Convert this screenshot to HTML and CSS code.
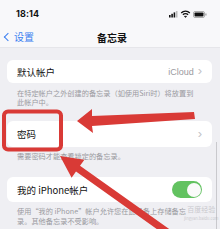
FILE: index.html
```html
<!DOCTYPE html>
<html lang="zh">
<head>
<meta charset="utf-8">
<link rel="stylesheet" href="styles.css">
</head>
<body>
<div class="screen">
  <div class="top">
    <div class="status">
      <span class="time">18:14</span>
      <span class="icons">
        <svg width="40" height="8" viewBox="0 0 40 8">
          <rect x="0" y="5" width="1.6" height="2.5" fill="#111"/>
          <rect x="2.3" y="3.8" width="1.6" height="3.7" fill="#111"/>
          <rect x="4.6" y="2.4" width="1.6" height="5.1" fill="#111"/>
          <rect x="6.9" y="1" width="1.6" height="6.5" fill="#bbb"/>
          <path d="M12.2 3 A6 6 0 0 1 20.8 3" stroke="#111" stroke-width="1.3" fill="none"/>
          <path d="M13.9 4.7 A3.6 3.6 0 0 1 19.1 4.7" stroke="#111" stroke-width="1.3" fill="none"/>
          <path d="M15.5 6.3 L16.5 7.4 L17.5 6.3 Z" fill="#111" stroke="#111" stroke-width="0.8"/>
          <rect x="24.5" y="1.5" width="11" height="6" rx="1.5" fill="#fff" stroke="#999" stroke-width="0.8"/>
          <rect x="25.5" y="2.5" width="9" height="4" rx="0.8" fill="#111"/>
          <rect x="36.3" y="3.5" width="1.2" height="2" fill="#999"/>
        </svg>
      </span>
    </div>
    <div class="nav">
      <span class="back"><span class="chev-left"></span>设置</span>
      <span class="title">备忘录</span>
    </div>
  </div>
  <div class="content">
    <div class="card card1">
      <span class="label">默认帐户</span>
      <span class="value">iCloud <span class="chev">&#x203A;</span></span>
    </div>
    <p class="foot foot1">在特定帐户之外创建的备忘录（如使用Siri时）将放置到此帐户中。</p>
    <div class="card card2">
      <span class="label">密码</span>
      <span class="value"><span class="chev">&#x203A;</span></span>
    </div>
    <p class="foot foot2">需要密码才能查看锁定的备忘录。</p>
    <div class="card card3">
      <span class="label">我的 iPhone帐户</span>
      <span class="toggle"><span class="knob"></span></span>
    </div>
    <p class="foot foot3">使用“我的 iPhone”帐户允许您在此设备上存储备忘录。其他备忘录不受影响。</p>
  </div>
  <div class="scrollbar"></div>
  <div class="watermark">百度经验<br><span class="wm-small">jingyan.baidu.com</span></div>
  <svg class="marks" width="220" height="229" viewBox="0 0 220 229">
    <rect x="4" y="111.5" width="57" height="38" rx="4" fill="none" stroke="#d93a36" stroke-width="4"/>
    <polygon points="77,121 92,109 92,116 194,112 195,119 92,126 93,133" fill="#d93a36"/>
    <polygon points="60,156 84.4,159.7 80,165.8 172,231 168,237 76,171.6 71.6,177.7" fill="#d93a36"/>
  </svg>
</div>
</body>
</html>
```

FILE: styles.css
```css
* { box-sizing: border-box; margin: 0; padding: 0; }
html, body { width: 220px; height: 229px; overflow: hidden; }
body {
  font-family: "Noto Sans CJK SC", "Noto Sans", "Liberation Sans", sans-serif;
  background: #efeff3;
  color: #111;
}
.screen { position: relative; width: 220px; height: 229px; overflow: hidden; }
.top { background: #f8f8fa; height: 48px; border-bottom: 1px solid #e6e6ea; }
.status {
  height: 25px;
  display: flex;
  align-items: center;
  justify-content: space-between;
  padding: 1px 11px 0 16px;
}
.time { font-family: "Inter", "Liberation Sans", sans-serif; font-weight: 700; font-size: 9px; letter-spacing: 0.1px; }
.icons { display: flex; align-items: center; margin-top: 1px; }
.icons svg { display: block; }
.nav {
  height: 22px;
  display: flex;
  align-items: center;
  justify-content: center;
  position: relative;
}
.back {
  position: absolute;
  left: 3px;
  top: 4px;
  display: flex;
  align-items: center;
  color: #3b7ff0;
  font-size: 10px;
  gap: 3px;
}
.chev-left {
  width: 6px; height: 6px;
  border-left: 1.4px solid #3b7ff0;
  border-bottom: 1.4px solid #3b7ff0;
  transform: rotate(45deg);
  margin-left: 2px;
}
.title { font-size: 10px; font-weight: 700; margin-top: 2px; margin-left: 4px; }
.content { padding: 12px 8px 0 7px; }
.card {
  background: #fff;
  border-radius: 6px;
  display: flex;
  align-items: center;
  justify-content: space-between;
  padding: 0 10px 0 10px;
  font-size: 9.5px;
}
.card1 { height: 23px; }
.card2 { height: 26px; margin-top: 14px; }
.card3 { height: 25px; margin-top: 16px; }
.value { color: #9a9aa0; font-size: 9px; display: flex; align-items: center; gap: 4px; font-family: "Liberation Sans", "Noto Sans CJK SC", sans-serif; }
.chev { color: #c2c2c6; font-size: 13px; line-height: 1; margin-top: -2px; }
.foot {
  color: #9a9a9f;
  font-size: 7.2px;
  line-height: 9px;
  padding: 4px 12px 0 10px;
}
.foot1 { padding-top: 6px; }
.foot2 { padding-top: 5px; }
.foot3 { padding-top: 4px; line-height: 10px; }
.toggle {
  width: 30px; height: 17px;
  border-radius: 9px;
  background: #62c260;
  display: flex;
  align-items: center;
  justify-content: flex-end;
  padding: 1.5px;
}
.knob { width: 14px; height: 14px; border-radius: 50%; background: #fafafa; }
.scrollbar {
  position: absolute;
  right: 3px; top: 142px;
  width: 1.5px; height: 90px;
  background: #c9c9cd;
}
.watermark {
  position: absolute;
  left: 184px; top: 205px;
  font-size: 7px;
  line-height: 8px;
  color: rgba(160,160,165,0.5);
  text-align: center;
}
.wm-small { font-size: 4px; }
.marks { position: absolute; left: 0; top: 0; }
```
